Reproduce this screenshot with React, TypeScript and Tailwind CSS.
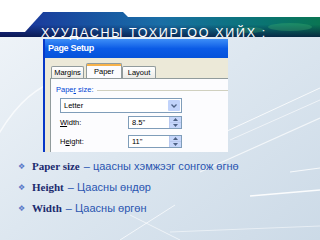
import React from "react";

const bullets = [
    { label: "Paper size", text: "– цаасны хэмжээг сонгож өгнө" },
    { label: "Height", text: "– Цаасны өндөр" },
    { label: "Width", text: "–  Цаасны өргөн" },
];

// Small XP spinner (up/down arrows)
const Spinner: React.FC = () => (
    <div className="flex w-[12px] flex-col border-l border-[#b9c9ef] bg-[#c6d6fa]">
        <div className="flex flex-1 items-center justify-center border-b border-[#b9c9ef]">
            <svg width="5" height="3" viewBox="0 0 5 3">
                <path d="M0 3 L2.5 0 L5 3 Z" fill="#4d6185" />
            </svg>
        </div>
        <div className="flex flex-1 items-center justify-center">
            <svg width="5" height="3" viewBox="0 0 5 3">
                <path d="M0 0 L2.5 3 L5 0 Z" fill="#4d6185" />
            </svg>
        </div>
    </div>
);

const PageSetupDialog: React.FC = () => {
    return (
        <div className="flex h-[113px] w-[185px] flex-col overflow-hidden border-l-[2px] border-[#0838c8] font-['Liberation_Sans',sans-serif]">
            {/* Title bar */}
            <div className="flex h-[19px] items-center bg-gradient-to-b from-[#3d8ef7] via-[#0b5be6] to-[#0552da] pl-[3px]">
                <span className="text-[9px] font-bold tracking-[-0.3px] text-white">
                    Page Setup
                </span>
            </div>

            {/* Body */}
            <div className="flex flex-1 flex-col bg-[#ece9d8] pl-[5px]">
                {/* Tabs */}
                <div className="flex h-[20px] items-end pl-[1px]">
                    <div className="flex h-[12px] w-[33px] items-center justify-center rounded-t-[2px] border border-b-0 border-[#919b9c] bg-gradient-to-b from-white to-[#ecebe6] text-[7.5px] text-black">
                        Margins
                    </div>
                    <div className="ml-[2px] flex h-[15px] w-[36px] flex-col rounded-t-[2px] border border-b-0 border-[#919b9c] bg-[#fcfcfe]">
                        <div className="h-[2px] bg-[#f7b24a]" />
                        <div className="flex flex-1 items-center justify-center text-[7.5px] text-black">
                            Paper
                        </div>
                    </div>
                    <div className="flex h-[12px] w-[34px] items-center justify-center rounded-t-[2px] border border-b-0 border-[#919b9c] bg-gradient-to-b from-white to-[#ecebe6] text-[7.5px] text-black">
                        Layout
                    </div>
                </div>

                {/* Tab panel */}
                <div className="flex flex-1 flex-col border-l border-t border-[#919b9c] bg-[#fcfcfe] pl-[5px] pt-[5px]">
                    <div className="flex h-[12px] items-center">
                        <span className="text-[7.5px] text-[#0046d5]">
                            Pape<span className="underline">r</span> size:
                        </span>
                        <div className="ml-[3px] h-px flex-1 bg-[#d0d0bf]" />
                    </div>

                    <div className="ml-[4px] mt-[2px] flex h-[15px] w-[122px] border border-[#7f9db9] bg-white">
                        <div className="flex flex-1 items-center pl-[3px] text-[7.5px] text-black">
                            Letter
                        </div>
                        <div className="m-px flex w-[12px] items-center justify-center rounded-[1px] bg-[#c1d3fb]">
                            <svg width="6" height="4" viewBox="0 0 6 4">
                                <path
                                    d="M0.5 0.5 L3 3 L5.5 0.5"
                                    stroke="#4d6185"
                                    strokeWidth="1.3"
                                    fill="none"
                                />
                            </svg>
                        </div>
                    </div>

                    <div className="ml-[4px] mt-[3px] flex h-[13px] items-center">
                        <span className="w-[68px] text-[7.5px] text-black">
                            <span className="underline">W</span>idth:
                        </span>
                        <div className="flex h-full w-[54px] border border-[#7f9db9] bg-white">
                            <div className="flex flex-1 items-center pl-[3px] text-[7.5px] text-black">
                                8.5"
                            </div>
                            <Spinner />
                        </div>
                    </div>

                    <div className="ml-[4px] mt-[6px] flex h-[13px] items-center">
                        <span className="w-[68px] text-[7.5px] text-black">
                            H<span className="underline">e</span>ight:
                        </span>
                        <div className="flex h-full w-[54px] border border-[#7f9db9] bg-white">
                            <div className="flex flex-1 items-center pl-[3px] text-[7.5px] text-black">
                                11"
                            </div>
                            <Spinner />
                        </div>
                    </div>
                </div>
            </div>
        </div>
    );
};

const App: React.FC = () => {
    return (
        <div className="relative h-[240px] w-[320px] overflow-hidden bg-gradient-to-br from-[#f1f5f9] via-[#dde7f0] to-[#ccdae7]">
            {/* Background streaks */}
            <svg
                className="absolute left-0 top-0"
                width="320"
                height="240"
                viewBox="0 0 320 240"
            >
                <path d="M-10 150 Q 20 90 60 80" stroke="#ffffff" strokeOpacity="0.7" strokeWidth="1.5" fill="none" />
                <path d="M225 132 L320 88" stroke="#ffffff" strokeOpacity="0.8" strokeWidth="1" />
                <path d="M230 140 L320 100" stroke="#ffffff" strokeOpacity="0.6" strokeWidth="1" />
                <path d="M200 172 L320 118" stroke="#ffffff" strokeOpacity="0.7" strokeWidth="1.2" />
                <path d="M250 196 L320 190" stroke="#ffffff" strokeOpacity="0.9" strokeWidth="1.5" />
                <path d="M290 172 L320 168" stroke="#ffffff" strokeOpacity="0.8" strokeWidth="1.2" />
                <path d="M120 240 L175 205" stroke="#ffffff" strokeOpacity="0.7" strokeWidth="1" />
                <path d="M130 215 L180 240" stroke="#ffffff" strokeOpacity="0.6" strokeWidth="1" />
                <path d="M170 232 L320 226" stroke="#ffffff" strokeOpacity="0.5" strokeWidth="1" />
            </svg>

            <div className="relative flex flex-col">
                {/* Header band */}
                <div className="relative flex h-[37px] flex-col bg-white">
                    <div className="h-[12px]" />
                    <div className="flex-1 bg-gradient-to-r from-[#1c2c9a] via-[#1a6ea6] to-[#0a7552]">
                        <div className="h-full bg-gradient-to-b from-[#00000000] via-[#00000000] to-[#06103abf]" />
                    </div>
                    {/* white cut-outs: slanted left edge and step at top right */}
                    <svg className="absolute left-0 top-0" width="320" height="37" viewBox="0 0 320 37">
                        <polygon points="0,11 44,11 25,32 0,32" fill="#ffffff" />
                        <polygon points="122,11 321,11 321,17 128,17" fill="#ffffff" />
                        <ellipse cx="290" cy="27" rx="22" ry="4" fill="#3fb070" opacity="0.35" />
                        <ellipse cx="250" cy="30" rx="14" ry="3" fill="#3fb070" opacity="0.3" />
                    </svg>
                    <div className="absolute left-[41px] top-[19px]">
                        <span className="text-[12.5px] leading-[13px] tracking-[1.7px] text-white font-['Liberation_Sans',sans-serif]">
                            ХУУДАСНЫ ТОХИРГОО ХИЙХ :
                        </span>
                    </div>
                </div>

                {/* Screenshot of dialog */}
                <div className="pl-[43px] pt-[2px]">
                    <PageSetupDialog />
                </div>

                {/* Bullet list */}
                <ul className="pl-[18px] pt-[4px]">
                    {bullets.map((b) => (
                        <li key={b.label} className="flex h-[21px] items-center">
                            <span className="w-[14px] text-[8px] text-[#5a78c8] font-['DejaVu_Sans',sans-serif]">
                                ❖
                            </span>
                            <span className="text-[11px] font-bold text-[#1b2a6e] font-['Liberation_Serif',serif]">
                                {b.label}
                            </span>
                            <span className="ml-[4px] text-[11px] text-[#2a55b0] font-['Liberation_Sans',sans-serif]">
                                {b.text}
                            </span>
                        </li>
                    ))}
                </ul>
            </div>
        </div>
    );
};

export default App;
